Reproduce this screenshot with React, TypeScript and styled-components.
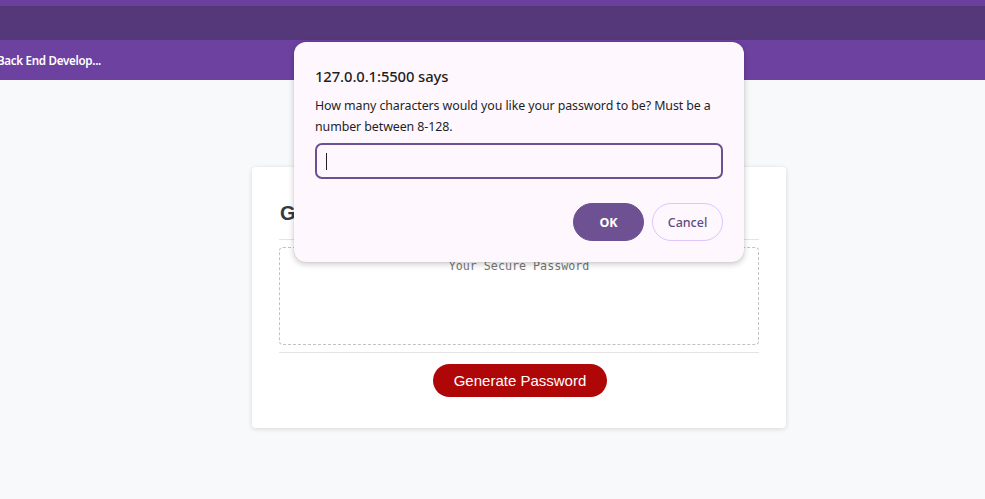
import React from "react";
import styled, { createGlobalStyle } from "styled-components";

const Global = createGlobalStyle`
  html, body { margin: 0; padding: 0; }
  body {
    background: #f8f9fa;
    width: 985px;
    height: 499px;
    overflow: hidden;
    font-family: "Liberation Sans", Arial, sans-serif;
  }
  * { box-sizing: border-box; }
`;

const Page = styled.div`
  position: relative;
  width: 985px;
  height: 499px;
  background: #f8f9fa;
  display: flex;
  flex-direction: column;
`;

const Chrome = styled.div`
  display: flex;
  flex-direction: column;
`;

const TopStrip = styled.div`
  height: 6px;
  background: #6a3f9d;
`;

const Toolbar = styled.div`
  height: 34px;
  background: #553879;
`;

const Bookmarks = styled.div`
  height: 40px;
  background: #6d41a0;
  display: flex;
  align-items: center;
`;

const Bookmark = styled.span`
  margin-left: -3px;
  color: #ffffff;
  font-family: "Noto Sans", "Open Sans", sans-serif;
  font-size: 11.6px;
  font-weight: 600;
  letter-spacing: -0.3px;
`;

const Main = styled.main`
  flex: 1;
  display: flex;
  align-items: flex-start;
  padding: 87px 0 0 252px;
`;

const Card = styled.section`
  width: 534px;
  background: #ffffff;
  border-radius: 4px;
  box-shadow: 0 1px 5px rgba(0, 0, 0, 0.14);
  padding: 0 27px;
  display: flex;
  flex-direction: column;
`;

const CardHeader = styled.header`
  padding: 34px 0 14px 1px;
  border-bottom: 1px solid #e4e4e4;
`;

const Title = styled.h2`
  margin: 0;
  font-size: 20px;
  line-height: 24px;
  font-weight: 700;
  color: #343a40;
`;

const CardBody = styled.div`
  padding: 7px 0 7px;
`;

const PasswordBox = styled.textarea`
  display: block;
  width: 100%;
  height: 98px;
  border: 1px dashed #c2c2c2;
  border-radius: 4px;
  resize: none;
  padding: 11px 10px;
  text-align: center;
  font-family: "DejaVu Sans Mono", "Liberation Mono", monospace;
  font-size: 11.7px;
  background: #ffffff;
  outline: none;
  &::placeholder {
    color: #757575;
  }
`;

const CardFooter = styled.footer`
  border-top: 1px solid #e4e4e4;
  padding: 11px 0 31px;
  display: flex;
  justify-content: center;
`;

const GenerateButton = styled.button`
  height: 33px;
  padding: 0 21px;
  margin-left: 2px;
  border: none;
  border-radius: 17px;
  background: #af0707;
  color: #ffffff;
  font-family: "Liberation Sans", Arial, sans-serif;
  font-size: 15px;
`;

const Dialog = styled.div`
  position: absolute;
  left: 294px;
  top: 42px;
  width: 450px;
  height: 220px;
  background: #fef8fe;
  border-radius: 12px;
  box-shadow: 0 2px 6px rgba(0, 0, 0, 0.22), 0 0 1px rgba(0, 0, 0, 0.2);
  padding: 24px 21px 21px;
  display: flex;
  flex-direction: column;
  font-family: "Noto Sans", "Open Sans", sans-serif;
`;

const DialogTitle = styled.div`
  font-size: 14.8px;
  line-height: 20px;
  font-weight: 500;
  color: #1f1f1f;
  letter-spacing: -0.1px;
`;

const DialogMessage = styled.div`
  margin-top: 9px;
  font-size: 12.4px;
  line-height: 21px;
  color: #1f1f1f;
  letter-spacing: -0.08px;
`;

const PromptInput = styled.div`
  margin-top: 6px;
  height: 36px;
  border: 2px solid #6c5192;
  border-radius: 7px;
  background: #fef8fe;
  display: flex;
  align-items: center;
  padding-left: 9px;
`;

const Caret = styled.span`
  width: 1px;
  height: 17px;
  background: #1f1f1f;
`;

const DialogActions = styled.div`
  margin-top: 24px;
  display: flex;
  justify-content: flex-end;
  gap: 8px;
`;

const DialogButton = styled.button<{ $primary?: boolean }>`
  width: 71px;
  height: 38px;
  border-radius: 19px;
  font-family: "Noto Sans", "Open Sans", sans-serif;
  font-size: 12.5px;
  font-weight: ${(p) => (p.$primary ? 700 : 500)};
  background: ${(p) => (p.$primary ? "#6e5192" : "transparent")};
  color: ${(p) => (p.$primary ? "#ffffff" : "#5e4d82")};
  border: 1px solid ${(p) => (p.$primary ? "#6e5192" : "#dcc6fb")};
  padding: 0;
`;

export default function App() {
  return (
    <>
      <Global />
      <Page>
        <Chrome>
          <TopStrip />
          <Toolbar />
          <Bookmarks>
            <Bookmark>Back End Develop...</Bookmark>
          </Bookmarks>
        </Chrome>
        <Main>
          <Card>
            <CardHeader>
              <Title>Generate a Password</Title>
            </CardHeader>
            <CardBody>
              <PasswordBox readOnly placeholder="Your Secure Password" />
            </CardBody>
            <CardFooter>
              <GenerateButton>Generate Password</GenerateButton>
            </CardFooter>
          </Card>
        </Main>
        <Dialog>
          <DialogTitle>127.0.0.1:5500 says</DialogTitle>
          <DialogMessage>
            How many characters would you like your password to be? Must be a number between 8-128.
          </DialogMessage>
          <PromptInput>
            <Caret />
          </PromptInput>
          <DialogActions>
            <DialogButton $primary>OK</DialogButton>
            <DialogButton>Cancel</DialogButton>
          </DialogActions>
        </Dialog>
      </Page>
    </>
  );
}
